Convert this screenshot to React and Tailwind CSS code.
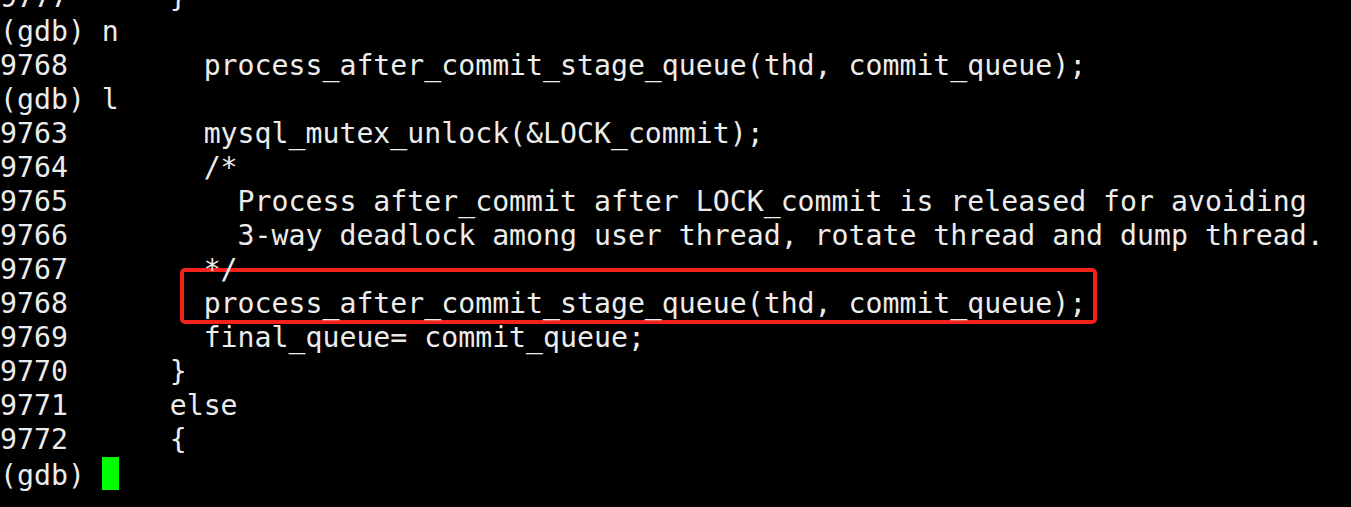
const LINES = [
  '9777      }',
  '(gdb) n',
  '9768        process_after_commit_stage_queue(thd, commit_queue);',
  '(gdb) l',
  '9763        mysql_mutex_unlock(&LOCK_commit);',
  '9764        /*',
  '9765          Process after_commit after LOCK_commit is released for avoiding',
  '9766          3-way deadlock among user thread, rotate thread and dump thread.',
  '9767        */',
  '9768        process_after_commit_stage_queue(thd, commit_queue);',
  '9769        final_queue= commit_queue;',
  '9770      }',
  '9771      else',
  '9772      {',
];

export default function App() {
  return (
    <div className="relative w-[1351px] h-[507px] bg-black overflow-hidden">
      <pre className="relative z-10 -mt-[19px] text-[28.2px] leading-[34px] text-[#ececec] font-['DejaVu_Sans_Mono',monospace] whitespace-pre">
        {LINES.map((line, i) => (
          <div key={i}>{line}</div>
        ))}
        <div>
          {'(gdb) '}
          <span className="inline-block w-[17px] h-[33px] bg-[#00ff00] align-[-5px]"></span>
        </div>
      </pre>

      {/* highlight box */}
      <div className="absolute left-[180px] top-[268px] w-[917px] h-[56px] border-4 border-[#f5211b] rounded-[5px]"></div>
    </div>
  );
}
